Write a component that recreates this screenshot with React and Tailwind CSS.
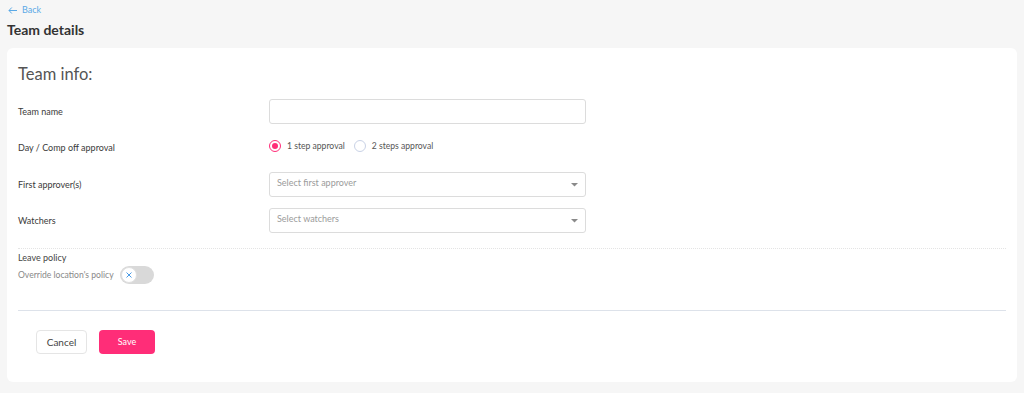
const Field = ({ label, children, className = "" }) => (
    <div className={`flex items-center ${className}`}>
        <div className="w-[251px] shrink-0 text-[9px] text-[#3a3a3a]">{label}</div>
        <div className="w-[317px]">{children}</div>
    </div>
);

const SelectBox = ({ placeholder }) => (
    <div className="h-[25px] border border-[#dcdcdc] rounded-[3px] flex items-center justify-between pl-[7px] pr-[7px]">
        <span className="text-[9px] text-[#9b9b9b] -mt-[3px]">{placeholder}</span>
        <svg width="7" height="4" viewBox="0 0 7 4">
            <path d="M0 0 L7 0 L3.5 3.5 Z" fill="#8a8a8a" />
        </svg>
    </div>
);

export default function App() {
    return (
        <div className="min-h-screen bg-[#f6f6f6] px-[7px] pt-[4px] pb-[11px]" style={{ fontFamily: "Lato, 'Open Sans', sans-serif" }}>
            <a href="#" className="flex items-center gap-[5px] h-[12px] ml-[1px] text-[9px] text-[#5aa9e6]">
                <svg width="9" height="7" viewBox="0 0 9 7" fill="none" stroke="#5aa9e6" strokeWidth="1">
                    <path d="M9 3.5 H1 M3.8 0.5 L1 3.5 L3.8 6.5" />
                </svg>
                Back
            </a>
            <h1 className="mt-[5px] text-[14px] font-bold text-[#333] leading-[18px]">Team details</h1>
            <div className="mt-[9px] bg-white rounded-[6px] px-[11px] pt-[14px] pb-[28px]">
                <div className="text-[16.5px] text-[#555] leading-[24px]">Team info:</div>

                <Field label="Team name" className="mt-[13px]">
                    <div className="h-[25px] border border-[#dcdcdc] rounded-[3px]" />
                </Field>

                <Field label="Day / Comp off approval" className="mt-[14px] h-[20px]">
                    <div className="flex items-center -mt-[3px] text-[8.6px] text-[#555]">
                        <span className="w-[12px] h-[12px] rounded-full border-[1.5px] border-[#ff2d78] flex items-center justify-center">
                            <span className="w-[6px] h-[6px] rounded-full bg-[#ff2d78]" />
                        </span>
                        <span className="ml-[6px]">1 step approval</span>
                        <span className="ml-[9px] w-[12px] h-[12px] rounded-full border border-[#c9d2e6]" />
                        <span className="ml-[6px]">2 steps approval</span>
                    </div>
                </Field>

                <Field label="First approver(s)" className="mt-[14px]">
                    <SelectBox placeholder="Select first approver" />
                </Field>

                <Field label="Watchers" className="mt-[11px]">
                    <SelectBox placeholder="Select watchers" />
                </Field>

                <div className="mt-[15px] border-t border-dotted border-[#e4e4e4]" />

                <div className="mt-[2px] text-[9px] text-[#444] leading-[14px]">Leave policy</div>
                <div className="mt-[1px] flex items-center gap-[6px]">
                    <span className="text-[8.6px] text-[#888]">Override location's policy</span>
                    <div className="w-[34px] h-[18px] rounded-full bg-[#d9d9d9] flex items-center pl-[1px]">
                        <div className="w-[16px] h-[16px] rounded-full bg-white border border-[#e0e0e0] flex items-center justify-center">
                            <svg width="6" height="6" viewBox="0 0 6 6" stroke="#4a9be6" strokeWidth="1">
                                <path d="M0.5 0.5 L5.5 5.5 M5.5 0.5 L0.5 5.5" />
                            </svg>
                        </div>
                    </div>
                </div>

                <div className="mt-[26px] border-t border-[#dde2ea]" />

                <div className="mt-[19px] ml-[18px] flex gap-[12px]">
                    <button className="w-[51px] h-[24px] rounded-[4px] border border-[#e5e5e5] bg-white text-[10px] text-[#444]">Cancel</button>
                    <button className="w-[56px] h-[24px] rounded-[4px] bg-[#ff2d78] text-[9px] text-white">Save</button>
                </div>
            </div>
        </div>
    );
}
